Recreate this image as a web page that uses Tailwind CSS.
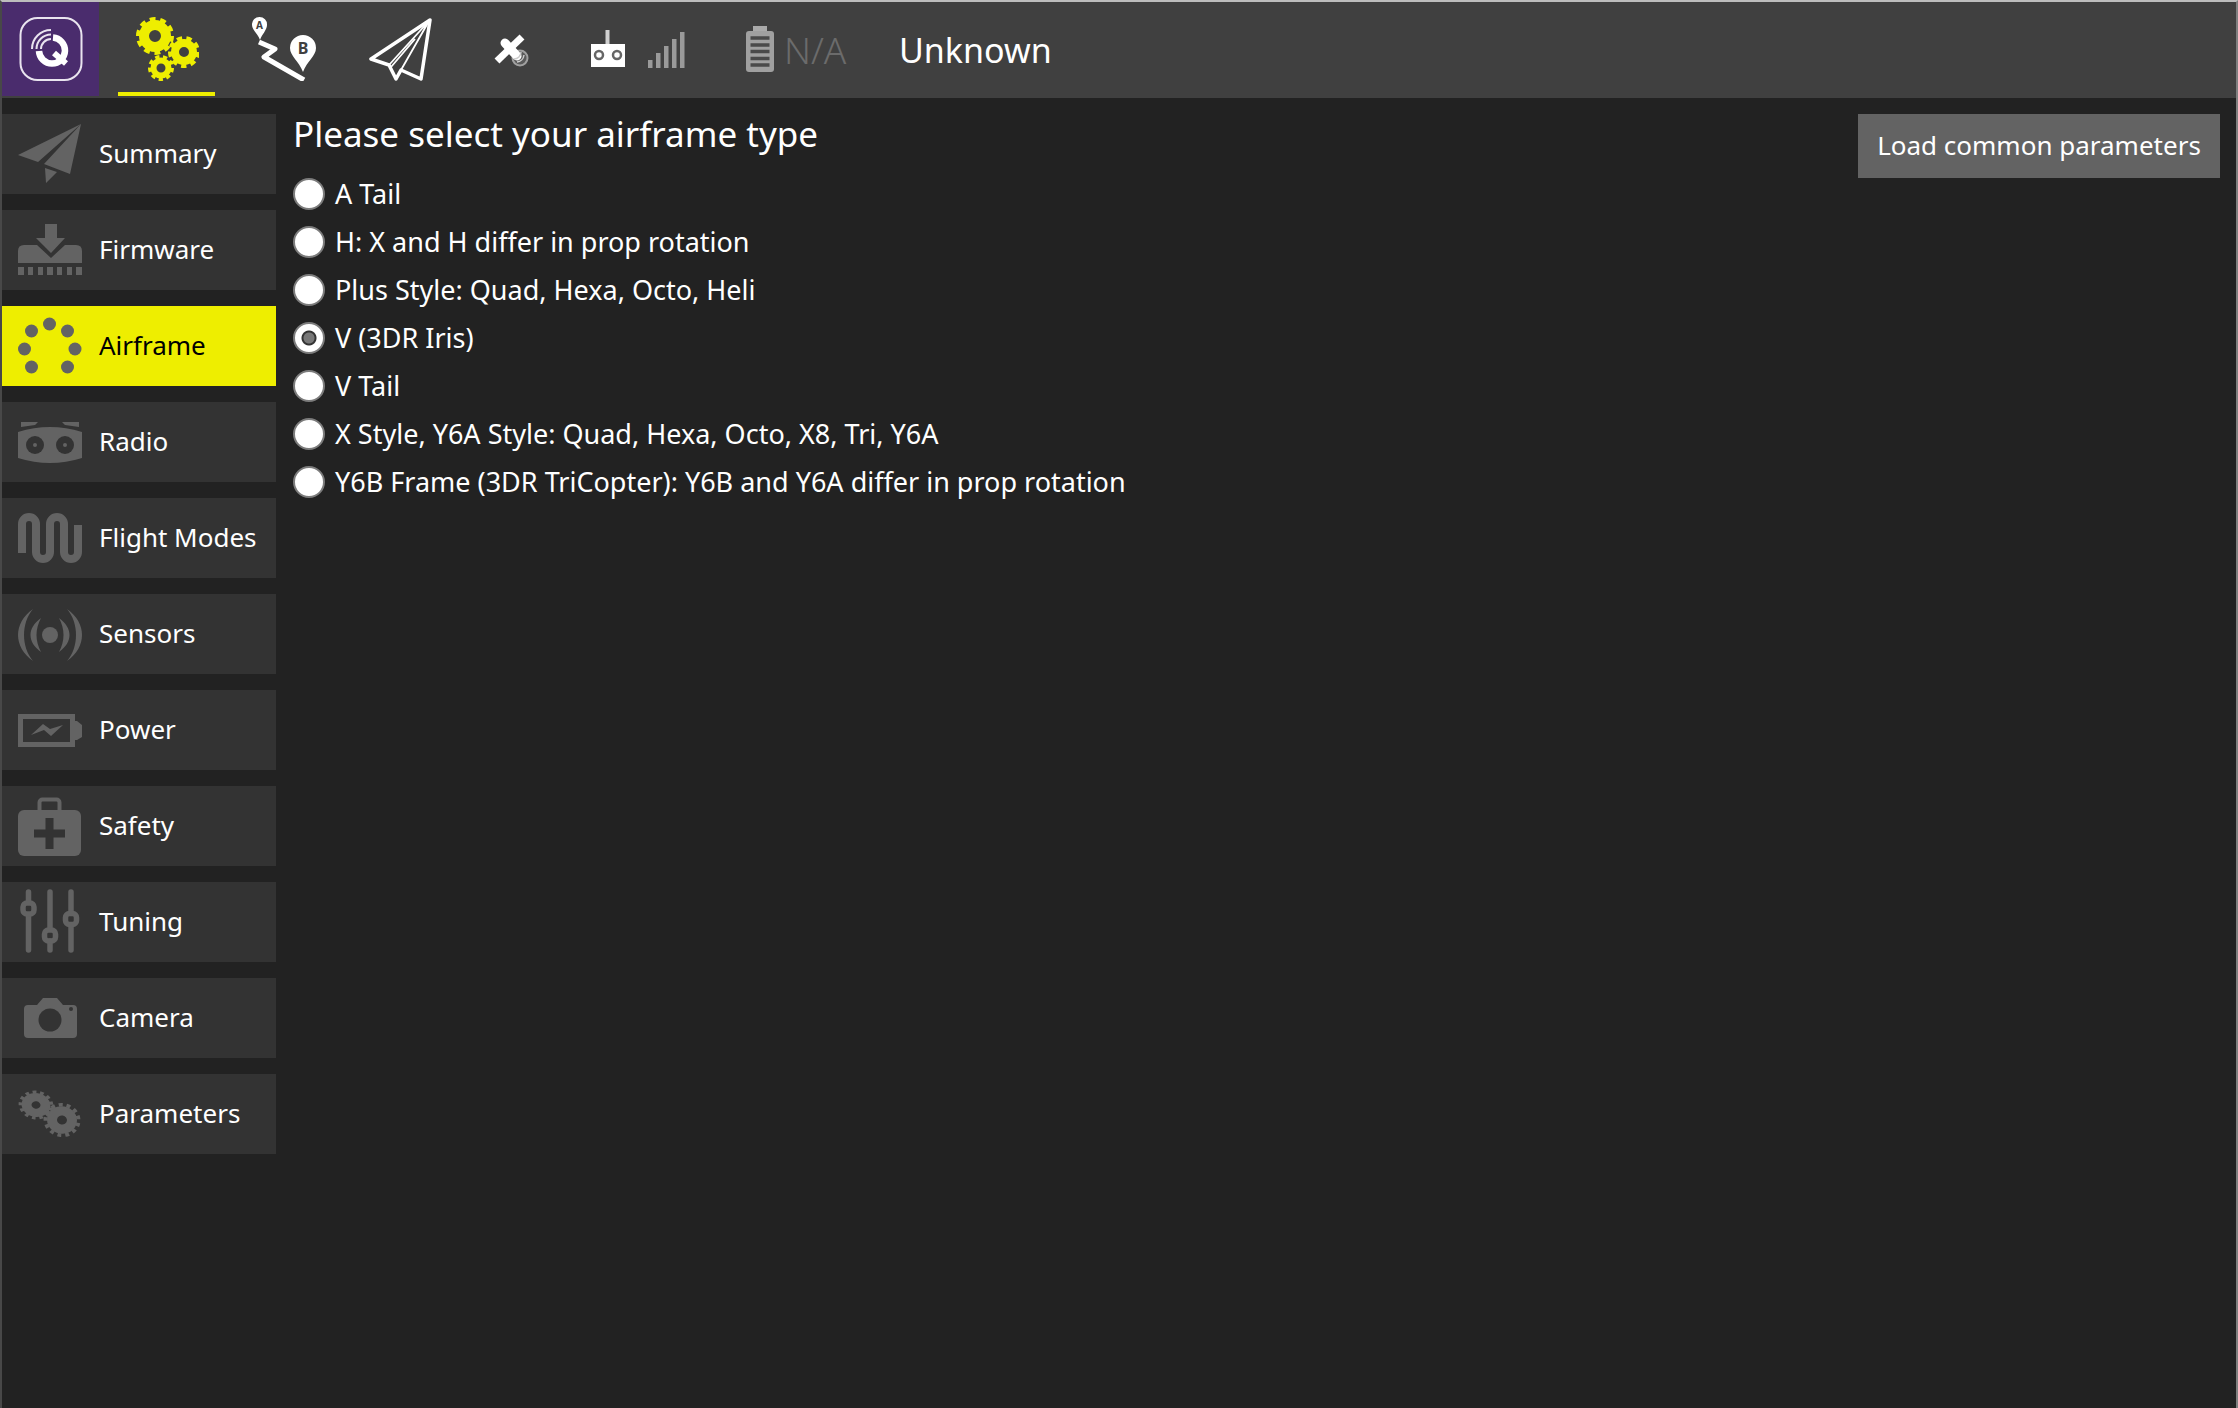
<!DOCTYPE html>
<html lang="en">
<head>
<meta charset="utf-8">
<title>Vehicle Setup</title>
<script src="https://cdn.jsdelivr.net/npm/@tailwindcss/browser@4"></script>
</head>
<body class="flex min-h-screen flex-col border-t-2 border-r-2 border-l-2 border-t-[#bdbdbd] border-r-[#808080] border-l-[#484848] bg-[#222222] font-['Noto_Sans','Open_Sans',sans-serif] text-[26px] leading-[32px] text-white">

<header class="flex h-24 items-stretch bg-[#404040]">
  <button type="button" aria-label="Application menu" class="flex h-[94px] w-[97px] items-center justify-center bg-[#4a2c6d]">
    <svg class="size-16" viewBox="0 0 64 64" fill="none">
      <rect x="1.500" y="1" width="61" height="62" rx="17" stroke="#e9e4ef" stroke-width="2"/>
      <path d="M34 20.500a13 13 0 1 1-14 13.500" stroke="#fff" stroke-width="6.500"/>
      <path d="M35 36l12 10.500" stroke="#fff" stroke-width="6"/>
      <path d="M32 13A19 19 0 0 0 13 32M32 17.500A14.500 14.500 0 0 0 17.500 32M32 22A10 10 0 0 0 22 32" stroke="#e9e4ef" stroke-width="2"/>
    </svg>
  </button>
  <button type="button" aria-label="Vehicle setup" class="ml-[19px] flex h-[94px] w-[97px] items-center justify-center border-b-4 border-[#eeee00] pt-1">
    <svg class="size-16" viewBox="0 0 64 64" fill="none" stroke="#eeee00">
      <circle cx="20" cy="19" r="11" stroke-width="10"/><circle cx="20" cy="19" r="17" stroke-width="4" pathLength="20" stroke-dasharray="1.100 .9"/>
      <circle cx="49" cy="35" r="9" stroke-width="8"/><circle cx="49" cy="35" r="14" stroke-width="4" pathLength="18" stroke-dasharray="1.100 .9"/>
      <circle cx="26" cy="51" r="7.500" stroke-width="6"/><circle cx="26" cy="51" r="11" stroke-width="4" pathLength="18" stroke-dasharray="1.100 .9"/>
    </svg>
  </button>
  <button type="button" aria-label="Plan" class="ml-5 flex h-[94px] w-[97px] items-center justify-center">
    <svg class="size-16" viewBox="0 0 64 64" fill="#fff">
      <path d="M7.500 0a7.500 7.500 0 0 1 7.500 8c0 5-5 9-7 15-2-6-8-10-8-15a7.500 7.500 0 0 1 7.500-8zM51 18a13 13 0 0 1 13 13c0 8-9 13-13 24-4-11-13-16-13-24a13 13 0 0 1 13-13z"/>
      <path d="M7 25l16 7-11 8 40 23" fill="none" stroke="#fff" stroke-width="5" stroke-linejoin="round"/>
      <text x="7.500" y="12" font-size="10" font-weight="700" text-anchor="middle" fill="#404040">A</text>
      <text x="51" y="37" font-size="16" font-weight="700" text-anchor="middle" fill="#404040">B</text>
    </svg>
  </button>
  <button type="button" aria-label="Fly" class="ml-5 flex h-[94px] w-[97px] items-center justify-center">
    <svg class="size-16" viewBox="0 0 64 64" fill="none" stroke="#fff" stroke-linejoin="round">
      <path d="M61 3L2 42l18 6 7 14 5-9 20 9z" stroke-width="3.500"/>
      <path d="M20 48L60 4 32 53M46 22L22 50" stroke-width="1.800"/>
    </svg>
  </button>
  <div class="ml-[45px] flex items-center">
    <svg class="h-10 w-9" viewBox="0 0 36 40" role="img" aria-label="GPS">
      <path d="M3 31L28 7" stroke="#fff" stroke-width="7"/>
      <circle cx="26" cy="28" r="7.500" fill="#5a5a5a" stroke="#a0a0a0" stroke-width="2"/>
      <path d="M11 13l12 13" stroke="#fff" stroke-width="9" stroke-linecap="round"/>
      <path d="M20 29a7 7 0 0 0 7-7M23 32a8 8 0 0 0 7-7" stroke="#ccc" stroke-width="1.500" fill="none"/>
    </svg>
    <svg class="ml-[60px] h-10 w-9" viewBox="0 0 36 40" role="img" aria-label="Remote control">
      <path d="M17.500 0v16" stroke="#d0d0d0" stroke-width="4"/><path d="M1 14h34v23H1z" fill="#fff"/>
      <g fill="none" stroke="#666" stroke-width="2.500"><circle cx="9" cy="25" r="4"/><circle cx="27" cy="25" r="4"/></g>
    </svg>
    <svg class="ml-[22px] h-9 w-[37px]" viewBox="0 0 37 36" fill="#9a9a9a" role="img" aria-label="Signal strength"><path d="M0 28h4.500v8H0zM8 21h4.500v15H8zM16 14h4.500v22H16zM24 7h4.500v29H24zM32 0h4.500v36H32z"/></svg>
    <svg class="ml-[61px] h-12 w-7" viewBox="0 0 28 48" role="img" aria-label="Battery">
      <path d="M7 0h14v6H7z" fill="#aaa"/><rect y="5" width="28" height="41" rx="3" fill="#a0a0a0"/>
      <path d="M4.500 12h19M4.500 19h19M4.500 25.500h19M4.500 32.500h19M4.500 39h19" stroke="#4a4a4a" stroke-width="3.500"/>
    </svg>
    <span class="ml-[10px] w-[67px] text-[37px] font-light text-[#6b6b6b]">N/A</span>
    <span class="ml-[48px] text-[34px]">Unknown</span>
  </div>
</header>

<div class="flex flex-1 items-start gap-[17px] pt-4">
  <nav aria-label="Setup sections" class="flex w-[274px] shrink-0 flex-col gap-4 *:flex *:h-20 *:items-center *:gap-[17px] *:pb-0.5 *:pl-4">
    <button type="button" class="bg-[#333333]">
      <svg class="size-16 shrink-0" viewBox="0 0 64 64" fill="#636363"><path d="M63 3L0 34l20 7zM63 3L26 43l26 10zM27 47l12 4-11 11z"/></svg>Summary</button>
    <button type="button" class="bg-[#333333]">
      <svg class="size-16 shrink-0" viewBox="0 0 64 64" fill="#636363"><path d="M27 7h12v14h8L33 36 18 21h9zM0 46V34q0-6 6-6h13l14 13 14-13h11q6 0 6 6v12zM0 50h6v8H0zM10 50h5v8h-5zM20 50h5v8h-5zM29 50h6v8h-6zM39 50h5v8h-5zM49 50h5v8h-5zM58 50h6v8h-6z"/></svg>Firmware</button>
    <button type="button" aria-current="page" class="bg-[#eeee00] text-black">
      <svg class="size-16 shrink-0" viewBox="0 0 64 64" fill="#636363"><circle cx="31.500" cy="11" r="6.500"/><circle cx="13.500" cy="18" r="6.500"/><circle cx="49.500" cy="18" r="6.500"/><circle cx="6.500" cy="36" r="6.500"/><circle cx="57" cy="36" r="6.500"/><circle cx="13.500" cy="54" r="6.500"/><circle cx="49.500" cy="54" r="6.500"/></svg>Airframe</button>
    <button type="button" class="bg-[#333333]">
      <svg class="size-16 shrink-0" viewBox="0 0 64 64" fill="#636363"><path d="M3 13h17l-3 3-14 2zM61 13H44l3 3 14 2zM0 23q32-10 64 0v26q-32 10-64 0z"/><g fill="#333"><circle cx="17" cy="36" r="9"/><circle cx="47" cy="36" r="9"/></g><circle cx="17" cy="36" r="2"/><circle cx="47" cy="36" r="2"/></svg>Radio</button>
    <button type="button" class="bg-[#333333]">
      <svg class="size-16 shrink-0" viewBox="0 0 64 64" fill="none" stroke="#636363" stroke-width="8"><path d="M4 48V19a7 7 0 0 1 14 0v28a7 7 0 0 0 14 0V19a7 7 0 0 1 14 0v28a7 7 0 0 0 14 0V20"/></svg>Flight Modes</button>
    <button type="button" class="bg-[#333333]">
      <svg class="size-16 shrink-0" viewBox="0 0 64 64" fill="#636363"><circle cx="32" cy="34" r="8"/><path d="M15 8C-5 22-5 46 15 60 3 46 3 22 15 8zM23 17C9 27 9 41 23 51 17 40 17 28 23 17zM49 8C69 22 69 46 49 60 61 46 61 22 49 8zM41 17C55 27 55 41 41 51 47 40 47 28 41 17z"/></svg>Sensors</button>
    <button type="button" class="bg-[#333333]">
      <svg class="size-16 shrink-0" viewBox="0 0 64 64" fill="#636363"><path d="M0 17h57v7h2l5 4v12l-5 3h-2v7H0zM5 22v23h47V22z" fill-rule="evenodd"/><path d="M13 38l12-11 7 5 13-4-12 11-7-6z"/></svg>Power</button>
    <button type="button" class="bg-[#333333]">
      <svg class="size-16 shrink-0" viewBox="0 0 64 64" fill="#636363"><rect x="21.500" y="6.500" width="20" height="14" rx="3" fill="none" stroke="#636363" stroke-width="4"/><rect y="17" width="63" height="46" rx="6"/><path d="M31.500 25v31M16 40.500h31" stroke="#333" stroke-width="8"/></svg>Safety</button>
    <button type="button" class="bg-[#333333]">
      <svg class="size-16 shrink-0" viewBox="0 0 64 64" fill="none" stroke="#636363" stroke-width="5.500" stroke-linecap="round"><path d="M10.500 3v9M10.500 26v35M32 3v36M32 52v9M53 3v20M53 37v24"/><rect x="5" y="14" width="11" height="11" rx="4"/><rect x="26.500" y="41" width="11" height="11" rx="4"/><rect x="47.500" y="24.500" width="11" height="11" rx="4"/></svg>Tuning</button>
    <button type="button" class="bg-[#333333]">
      <svg class="size-16 shrink-0" viewBox="0 0 64 64" fill="#636363"><path d="M10 20h9l6-7h14l6 7h10q4 0 4 4v25q0 4-4 4H10q-4 0-4-4V24q0-4 4-4z"/><circle cx="32" cy="35" r="11.500" fill="#333"/><circle cx="53" cy="24" r="2" fill="#333"/></svg>Camera</button>
    <button type="button" class="bg-[#333333]">
      <svg class="size-16 shrink-0" viewBox="0 0 64 64" fill="none" stroke="#636363"><g transform="translate(18 24) rotate(10) scale(1 .82)"><circle r="9.500" stroke-width="10"/><circle r="15.500" stroke-width="4" pathLength="26" stroke-dasharray="1 1"/></g><g transform="translate(44 39) rotate(10) scale(1 .92)"><circle r="10" stroke-width="10"/><circle r="16.500" stroke-width="4" pathLength="26" stroke-dasharray="1 1"/></g></svg>Parameters</button>
  </nav>

  <main class="flex flex-1 items-start justify-between pr-4">
    <fieldset>
      <legend class="h-[56px] text-[35px] leading-[40px]">Please select your airframe type</legend>
      <div class="flex flex-col text-[27px] *:flex *:h-12 *:items-center *:gap-[10px]">
        <label><input type="radio" name="airframe" class="size-8 shrink-0 appearance-none rounded-full border-2 border-[#7c7c7c] bg-white">A Tail</label>
        <label><input type="radio" name="airframe" class="size-8 shrink-0 appearance-none rounded-full border-2 border-[#7c7c7c] bg-white">H: X and H differ in prop rotation</label>
        <label><input type="radio" name="airframe" class="size-8 shrink-0 appearance-none rounded-full border-2 border-[#7c7c7c] bg-white">Plus Style: Quad, Hexa, Octo, Heli</label>
        <label><input type="radio" name="airframe" checked class="size-8 shrink-0 appearance-none rounded-full border-2 border-[#7c7c7c] bg-white bg-[radial-gradient(circle,#777777_5px,#333333_6px,#333333_7px,#ffffff_8px)]">V (3DR Iris)</label>
        <label><input type="radio" name="airframe" class="size-8 shrink-0 appearance-none rounded-full border-2 border-[#7c7c7c] bg-white">V Tail</label>
        <label><input type="radio" name="airframe" class="size-8 shrink-0 appearance-none rounded-full border-2 border-[#7c7c7c] bg-white">X Style, Y6A Style: Quad, Hexa, Octo, X8, Tri, Y6A</label>
        <label><input type="radio" name="airframe" class="size-8 shrink-0 appearance-none rounded-full border-2 border-[#7c7c7c] bg-white">Y6B Frame (3DR TriCopter): Y6B and Y6A differ in prop rotation</label>
      </div>
    </fieldset>
    <button type="button" class="h-16 w-[362px] shrink-0 bg-[#636363] pb-0.5">Load common parameters</button>
  </main>
</div>
</body>
</html>
